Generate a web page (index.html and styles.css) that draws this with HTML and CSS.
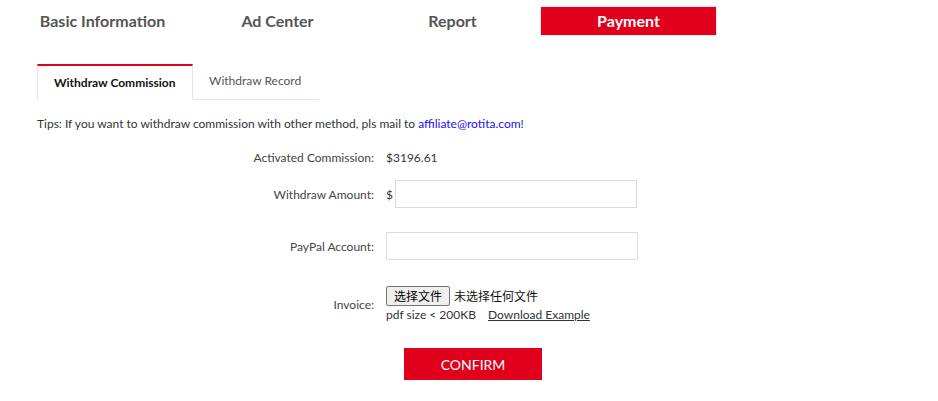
FILE: index.html
```
<!DOCTYPE html>
<html lang="en">
<head>
  <meta charset="UTF-8">
  <title>Payment</title>
  <link rel="stylesheet" href="styles.css">
</head>
<body>

<div id="nav">
  <div class="nav-item">Basic Information</div>
  <div class="nav-item">Ad Center</div>
  <div class="nav-item">Report</div>
  <div class="nav-item ativo">Payment</div>
</div>

<div id="conteudo">
  <div id="abas">
    <div class="aba ativa">Withdraw Commission</div>
    <div class="aba">Withdraw Record</div>
  </div>

  <p id="dica">Tips: If you want to withdraw commission with other method, pls mail to <a href="#">affiliate@rotita.com</a>!</p>

  <div class="linha linha-valor">
    <div class="rotulo">Activated Commission:</div>
    <div class="campo">$3196.61</div>
  </div>

  <div class="linha linha-input">
    <div class="rotulo">Withdraw Amount:</div>
    <div class="campo"><span class="moeda">$</span><input class="entrada" type="text"></div>
  </div>

  <div class="linha linha-input">
    <div class="rotulo">PayPal Account:</div>
    <div class="campo"><input class="entrada larga" type="text"></div>
  </div>

  <div class="linha linha-arquivo">
    <div class="rotulo">Invoice:</div>
    <div class="campo">
      <div class="arquivo">
        <button class="btn-arquivo" type="button">选择文件</button>
        <span class="sem-arquivo">未选择任何文件</span>
      </div>
      <div class="nota">pdf size &lt; 200KB <a href="#">Download Example</a></div>
    </div>
  </div>

  <div class="acoes">
    <button id="confirmar" type="button">CONFIRM</button>
  </div>
</div>

</body>
</html>
```

FILE: styles.css
```
* {
  box-sizing: border-box;
  margin: 0;
  padding: 0;
}

body {
  background: #fff;
  font-family: Lato, 'Open Sans', sans-serif;
  color: #333;
  font-size: 12px;
}

#nav {
  display: flex;
  padding: 6px 0 0 15px;
}

.nav-item {
  width: 175px;
  height: 30px;
  line-height: 30px;
  text-align: center;
  font-size: 16px;
  font-weight: bold;
  color: #555;
}

.nav-item.ativo {
  width: 177px;
  background: #e0001b;
  color: #fff;
  border: 1px solid #e8e8e8;
  line-height: 28px;
}

#conteudo {
  padding: 28px 0 0 37px;
}

#abas {
  display: flex;
  width: 282px;
  border-bottom: 1px solid #e6e6e6;
}

.aba {
  height: 35px;
  line-height: 33px;
  padding: 0 16px;
  font-size: 12px;
  color: #555;
}

.aba.ativa {
  width: 156px;
  border-top: 2px solid #e0001b;
  border-left: 1px solid #e6e6e6;
  border-right: 1px solid #e6e6e6;
  margin-bottom: -1px;
  height: 36px;
  background: #fff;
  color: #111;
  font-weight: bold;
  line-height: 34px;
}

#dica {
  margin-top: 17px;
  line-height: 14px;
  color: #333;
}

#dica a {
  color: #1a0dff;
  text-decoration: none;
}

.linha {
  display: grid;
  grid-template-columns: 337px 1fr;
  column-gap: 12px;
  align-items: center;
}

.rotulo {
  text-align: right;
  color: #444;
}

.linha-valor {
  margin-top: 19px;
  height: 14px;
}

.linha-input {
  height: 28px;
}

.linha-valor + .linha-input {
  margin-top: 16px;
}

.linha-input + .linha-input {
  margin-top: 24px;
}

.campo {
  display: flex;
  align-items: center;
}

.moeda {
  width: 9px;
}

.entrada {
  width: 242px;
  height: 28px;
  border: 1px solid #ddd;
  outline: none;
}

.entrada.larga {
  width: 252px;
}

.linha-arquivo {
  margin-top: 25px;
  align-items: start;
}

.linha-arquivo .rotulo {
  padding-top: 12px;
}

.linha-arquivo .campo {
  display: block;
}

.arquivo {
  display: flex;
  align-items: center;
  height: 21px;
}

.btn-arquivo {
  width: 64px;
  height: 20px;
  font-family: 'Noto Sans CJK SC', sans-serif;
  font-size: 12px;
  line-height: 16px;
  color: #000;
  background: #efefef;
  border: 1px solid #767676;
  border-radius: 2px;
}

.sem-arquivo {
  margin-left: 4px;
  font-family: 'Noto Sans CJK SC', sans-serif;
  font-size: 12px;
  color: #111;
}

.nota {
  margin-top: 2px;
  line-height: 14px;
}

.nota a {
  margin-left: 9px;
  color: #333;
}

.acoes {
  padding-left: 367px;
  margin-top: 26px;
}

#confirmar {
  width: 138px;
  height: 32px;
  background: #e0001b;
  color: #fff;
  border: none;
  font-family: Lato, sans-serif;
  font-size: 14px;
}
```
